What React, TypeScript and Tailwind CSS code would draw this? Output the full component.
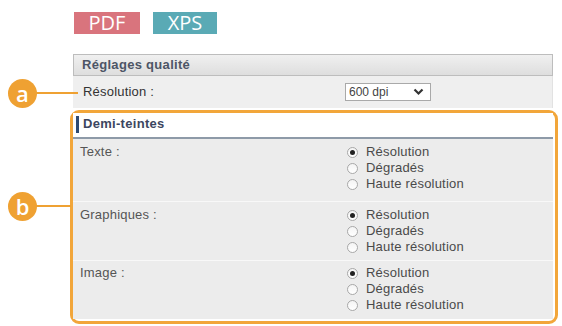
import React from "react";

const font = { fontFamily: '"Liberation Sans", Arial, sans-serif' };

function Radio({ checked, label }: { checked?: boolean; label: string }) {
  return (
    <div className="flex items-center h-[16px]">
      <span className="w-[11px] h-[11px] rounded-full border border-[#a8a8a8] bg-gradient-to-b from-[#f4f4f4] to-white flex items-center justify-center shrink-0">
        {checked && <span className="w-[5px] h-[5px] rounded-full bg-[#222]" />}
      </span>
      <span className="ml-[8px] text-[13px] leading-[16px] text-[#4a4a4a] tracking-[0.2px]">{label}</span>
    </div>
  );
}

function Row({ label, pt, h, last }: { label: string; pt: string; h: string; last?: boolean }) {
  return (
    <div className={`flex bg-[#ececec] ${pt} ${h} ${last ? "" : "border-b border-[#f8f8f8]"}`}>
      <div className="w-[274px] pl-[7px] text-[13px] leading-[16px] text-[#555] tracking-[0.2px]">{label}</div>
      <div className="flex flex-col">
        <Radio checked label="Résolution" />
        <Radio label="Dégradés" />
        <Radio label="Haute résolution" />
      </div>
    </div>
  );
}

function Badge({ letter }: { letter: string }) {
  return (
    <div className="w-[29px] h-[29px] rounded-full bg-[#efa132] flex items-center justify-center text-white text-[22px] font-semibold leading-none pb-[2px]" style={{ fontFamily: '"Open Sans", sans-serif' }}>
      {letter}
    </div>
  );
}

export default function App() {
  return (
    <div className="relative w-[562px] h-[326px] bg-white overflow-hidden" style={font}>
      <div className="flex gap-[13px] pl-[74px] pt-[12px]">
        <div className="w-[66px] h-[22px] bg-[#d9747d] text-white text-[20px] font-normal flex items-center justify-center leading-none" style={{ fontFamily: '"Open Sans", sans-serif' }}>
          PDF
        </div>
        <div className="w-[64px] h-[22px] bg-[#5aaab5] text-white text-[20px] font-normal flex items-center justify-center leading-none" style={{ fontFamily: '"Open Sans", sans-serif' }}>
          XPS
        </div>
      </div>

      <div className="ml-[73px] w-[480px] mt-[20px]">
        <div className="h-[22px] border border-[#bdbdbd] bg-gradient-to-b from-[#f0f0f0] to-[#dedede] flex items-center pl-[8px] text-[13px] font-bold text-[#4d5566] tracking-[0.3px]">
          Réglages qualité
        </div>
        <div className="h-[32px] bg-[#efefef] flex items-center border-r border-[#e2e2e2]">
          <div className="w-[272px] pl-[10px] text-[13px] text-[#333] tracking-[0.2px]">Résolution :</div>
          <div className="w-[86px] h-[18px] bg-white border border-[#a9a9a9] flex items-center justify-between pl-[3px] pr-[6px] text-[12px] text-[#444]">
            <span>600 dpi</span>
            <svg width="11" height="8" viewBox="0 0 11 8">
              <path d="M1.5 1.5 L5.5 5.5 L9.5 1.5" stroke="#333" strokeWidth="2.2" fill="none" />
            </svg>
          </div>
        </div>

        <div className="-ml-[3px] -mr-[5px] mt-[2px] border-[3px] border-[#f2a63a] rounded-[9px] pr-[2px] pb-[2px]">
          <div className="h-[26px] bg-white border-b-2 border-[#8e9aa8] flex items-center pl-[3px] pb-[2px]">
            <div className="w-[3px] h-[17px] bg-[#2e4a73]" />
            <span className="ml-[4px] text-[13px] font-bold text-[#3c4660] tracking-[0.3px]">Demi-teintes</span>
          </div>
          <Row label="Texte :" pt="pt-[5px]" h="h-[63px]" />
          <Row label="Graphiques :" pt="pt-[5px]" h="h-[59px]" />
          <Row label="Image :" pt="pt-[4px]" h="h-[58px]" last />
        </div>
      </div>

      {/* annotation a */}
      <div className="absolute left-[8px] top-[79px]">
        <Badge letter="a" />
      </div>
      <div className="absolute left-[36px] top-[92px] w-[42px] h-[2px] bg-[#efa132]" />

      {/* annotation b */}
      <div className="absolute left-[8px] top-[192px]">
        <Badge letter="b" />
      </div>
      <div className="absolute left-[36px] top-[205px] w-[35px] h-[2px] bg-[#efa132]" />
    </div>
  );
}
